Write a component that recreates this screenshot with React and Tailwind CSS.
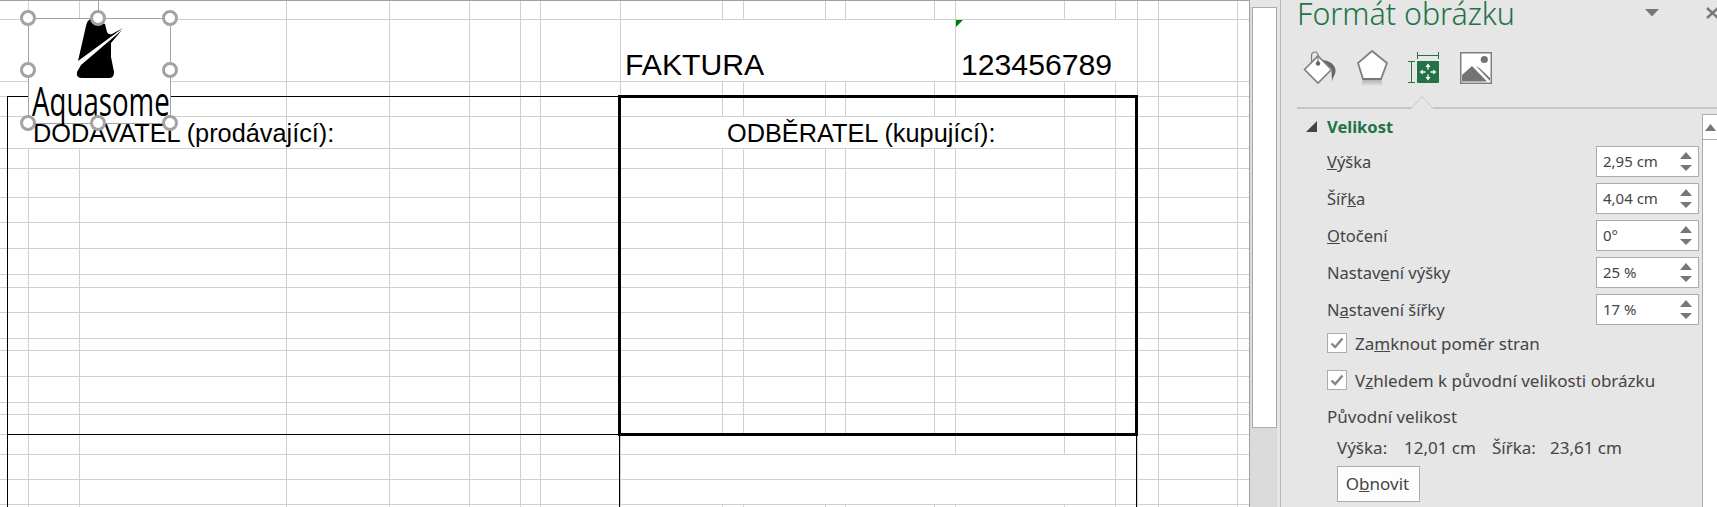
const ALL = [7, 28, 79, 286, 389, 469, 520, 540, 620, 722, 743, 825, 845, 934, 955, 1064, 1115, 1137, 1158, 1237];
const NO_FIRST = ALL.slice(1);
const RIGHT = [1115, 1137, 1158, 1237];

const without = (list, drop) => list.filter((x) => !drop.includes(x));

const ROWS = [
  { y: 19, lines: NO_FIRST },
  { y: 81, lines: [286, 389, 469, 520, 540, 620, 955, 1137, 1158, 1237] },
  { y: 96, lines: NO_FIRST },
  { y: 116, lines: without(ALL, [28]) },
  { y: 148, lines: [7, 286, 389, 469, 520, 540, 620, 1064, 1115, 1137, 1158, 1237] },
  { y: 168 },
  { y: 197 },
  { y: 222 },
  { y: 248 },
  { y: 274 },
  { y: 287 },
  { y: 312 },
  { y: 338 },
  { y: 350 },
  { y: 376 },
  { y: 402 },
  { y: 414 },
  { y: 434 },
  { y: 454, lines: [7, 28, 79, 286, 389, 469, 520, 540, 620, 955, 1064, ...RIGHT] },
  { y: 479, lines: [7, 28, 79, 286, 389, 469, 520, 540, 620, ...RIGHT] },
  { y: 504, lines: [7, 28, 79, 286, 389, 469, 520, 540, 620, ...RIGHT] },
  { y: 507 },
];

// text sits in the merged cell that ends at the given gridline
const CELL_TEXT = {
  "81:955": <span className="pl-[4px] text-[30.2px] leading-none self-end mb-[1px]">FAKTURA</span>,
  "81:1137": (
    <>
      <svg className="absolute left-0 top-0" width="7" height="7" viewBox="0 0 7 7">
        <path d="M0 0H7L0 7Z" fill="#008000" />
      </svg>
      <span className="pl-[5px] text-[30.2px] leading-none self-end mb-[1px]">123456789</span>
    </>
  ),
  "148:286": <span className="pl-[25px] text-[25.3px] leading-none mt-[3px]">DODAVATEL (prodávající):</span>,
  "148:1064": <span className="pl-[106px] text-[25.3px] leading-none mt-[3px]">ODBĚRATEL (kupující):</span>,
};

function SheetRow({ row, prevY }) {
  const lines = row.lines || ALL;
  const last = row.y === 507;
  return (
    <div className="flex shrink-0" style={{ height: row.y - prevY }}>
      {lines.map((x, i) => {
        const from = i === 0 ? -1 : lines[i - 1];
        return (
          <div
            key={x}
            className={`relative flex items-center whitespace-nowrap shrink-0 border-r border-[#d0d0d0] ${last ? "" : "border-b"}`}
            style={{ width: x - from }}
          >
            {CELL_TEXT[`${row.y}:${x}`]}
          </div>
        );
      })}
      <div className={`flex-1 border-[#d0d0d0] ${last ? "" : "border-b"}`} />
    </div>
  );
}

function Logo() {
  return (
    <svg className="absolute left-0 top-0" width="142" height="70" viewBox="28 18 142 70">
      <path
        d="M77 60 L85 25 Q86 19 90 18 L104 23 L106 31 Q107 34 111 33 L122 27 Z"
        fill="#000"
      />
      <path
        d="M121 29 L110 42 L110 56 L113 71 Q113 77 108 77 L81 77 Q75 77 76 71 L80 64 Z"
        fill="#000"
      />
    </svg>
  );
}

function Handle({ className }) {
  return <div className={`absolute w-[16px] h-[16px] rounded-full border-[3px] border-[#a3a3a3] bg-white ${className}`} />;
}

function Picture() {
  return (
    <>
      <div className="absolute left-[98px] top-0 w-px h-[18px] bg-[#a3a3a3]" />
      <div className="absolute left-[28px] top-[18px] w-[143px] h-[106px] bg-white border border-[#a3a3a3]">
        <Logo />
        <div
          className="absolute left-[3px] top-[53px] origin-left scale-x-[0.675] whitespace-nowrap text-[41px] leading-[56px] text-black"
          style={{ fontFamily: '"Open Sans", sans-serif' }}
        >
          Aquasome
        </div>
      </div>
      <Handle className="left-[20px] top-[10px]" />
      <Handle className="left-[90px] top-[10px]" />
      <Handle className="left-[162px] top-[10px]" />
      <Handle className="left-[20px] top-[62px]" />
      <Handle className="left-[162px] top-[62px]" />
      <Handle className="left-[20px] top-[115px]" />
      <Handle className="left-[90px] top-[115px]" />
      <Handle className="left-[162px] top-[115px]" />
    </>
  );
}

function Sheet() {
  return (
    <div
      className="relative w-[1250px] h-[507px] shrink-0 overflow-hidden bg-white border-r border-[#a0a0a0] text-black"
      style={{ fontFamily: '"Liberation Sans", Arial, sans-serif' }}
    >
      <div className="h-px bg-[#a0a0a0]" />
      <div className="flex flex-col">
        {ROWS.map((row, i) => (
          <SheetRow key={row.y} row={row} prevY={i === 0 ? 0 : ROWS[i - 1].y} />
        ))}
      </div>
      {/* thin borders */}
      <div className="absolute left-[7px] top-[96px] w-[612px] h-px bg-black" />
      <div className="absolute left-[7px] top-[96px] w-px h-[411px] bg-black" />
      <div className="absolute left-[7px] top-[434px] w-[612px] h-px bg-black" />
      <div className="absolute left-[619px] top-[434px] w-px h-[73px] bg-black" />
      <div className="absolute left-[1136px] top-[434px] w-px h-[73px] bg-black" />
      {/* thick box */}
      <div className="absolute left-[618px] top-[95px] w-[520px] h-[341px] border-[3px] border-black" />
      <Picture />
    </div>
  );
}

function Spin() {
  return (
    <svg width="12" height="20" viewBox="0 0 12 20" className="shrink-0">
      <path d="M6 0L12 7H0Z" fill="#777" />
      <path d="M0 13H12L6 19Z" fill="#777" />
    </svg>
  );
}

function Field({ label, value }) {
  return (
    <div className="flex items-center justify-between h-[31px] mb-[6px]">
      <div className="pt-[1px] text-[16.5px] text-[#444]">{label}</div>
      <div className="flex items-center justify-between w-[103px] h-[31px] pl-[6px] pr-[6px] bg-white border border-[#ababab] text-[15px] text-[#444]">
        <span>{value}</span>
        <Spin />
      </div>
    </div>
  );
}

function Check({ children }) {
  return (
    <div className="flex items-center h-[20px] mb-[17px]">
      <div className="flex items-center justify-center w-[20px] h-[20px] bg-white border border-[#ababab]">
        <svg width="14" height="12" viewBox="0 0 14 12">
          <path d="M1.5 6.5L5.2 10L12.5 1.5" fill="none" stroke="#858585" strokeWidth="2.4" />
        </svg>
      </div>
      <div className="ml-[8px] pt-[2px] text-[17px] text-[#444] whitespace-nowrap">{children}</div>
    </div>
  );
}

function TabIcons() {
  return (
    <div className="relative h-[46px] pl-[22px] shrink-0">
      <div className="flex items-start">
        <svg width="34" height="34" viewBox="0 0 34 34" className="mt-[1px]">
          <path d="M19 9C26 9 33 14 32.5 20C32 25 30 25 29 31L28.5 19Z" fill="#666" />
          <path d="M1.5 18.5L15 5L28.5 18.5L15 32Z" fill="#fff" stroke="#7f7f7f" strokeWidth="1.6" />
          <path d="M8.5 11V5Q8.5 1 12 1Q15 1 15 5V12" fill="none" stroke="#7f7f7f" strokeWidth="1.2" />
          <circle cx="15" cy="12.5" r="2.2" fill="#666" />
        </svg>
        <svg width="32" height="36" viewBox="0 0 32 36" className="ml-[20px]">
          <defs>
            <linearGradient id="refl" x1="0" y1="0" x2="0" y2="1">
              <stop offset="0" stopColor="#9a9a9a" />
              <stop offset="1" stopColor="#e6e6e6" />
            </linearGradient>
          </defs>
          <path d="M6 29L4 36H26L24 29Z" fill="url(#refl)" opacity="0.8" />
          <path d="M15 1L30 13L24 29H6L1 13Z" fill="#fff" stroke="#7f7f7f" strokeWidth="1.8" />
          <path d="M6 29H24" stroke="#777" strokeWidth="2" />
        </svg>
        <svg width="32" height="32" viewBox="0 0 32 32" className="ml-[19px] mt-[2px]">
          <path d="M9.5 0V7M9.5 3.5H30.5M30.5 0V7" fill="none" stroke="#217346" strokeWidth="1" />
          <path d="M0 9.5H7M3.5 9.5V30.5M0 30.5H7" fill="none" stroke="#217346" strokeWidth="1" />
          <rect x="9" y="9" width="22" height="22" rx="1" fill="#217346" />
          <path d="M20 11.5L22.5 15H20.7V17.5H19.3V15H17.5ZM20 28.5L17.5 25H19.3V22.5H20.7V25H22.5ZM11.5 20L15 17.5V19.3H17.5V20.7H15V22.5ZM28.5 20L25 22.5V20.7H22.5V19.3H25V17.5Z" fill="#fff" />
        </svg>
        <svg width="32" height="32" viewBox="0 0 32 32" className="ml-[20px] mt-[2px]">
          <rect x="0.75" y="0.75" width="30.5" height="30.5" fill="#fff" stroke="#7f7f7f" strokeWidth="1.5" />
          <circle cx="24.3" cy="7.5" r="3.6" fill="#737373" />
          <path d="M2 23L12 14L27 29.5H2Z" fill="#737373" />
          <path d="M16 14L20 16.5L30 26V29L16 14Z" fill="#737373" />
        </svg>
      </div>
    </div>
  );
}

function Separator() {
  return (
    <div className="relative h-[2px] ml-[16px] bg-[#c6c6c6] shrink-0">
      <svg className="absolute left-[114px] -top-[12px]" width="22" height="14" viewBox="0 0 22 14">
        <path d="M0 14H22V13L11 1L0 13Z" fill="#e6e6e6" />
        <path d="M0 13.5L11 1.5L22 13.5" fill="none" stroke="#c6c6c6" strokeWidth="1" />
      </svg>
    </div>
  );
}

function Panel() {
  return (
    <div
      className="flex flex-col flex-1 h-[507px] bg-[#e6e6e6] overflow-hidden"
      style={{ fontFamily: '"Noto Sans", "Open Sans", sans-serif' }}
    >
      <div className="flex items-start justify-between h-[50px] shrink-0 pl-[16px]">
        <div className="text-[30.4px] font-light leading-[28px] text-[#217346] whitespace-nowrap">Formát obrázku</div>
        <div className="flex items-start">
          <svg width="14" height="8" viewBox="0 0 14 8" className="mt-[9px]">
            <path d="M0 0H14L7 7.5Z" fill="#777" />
          </svg>
          <svg width="11" height="12" viewBox="0 0 11 12" className="ml-[47px] mt-[7px] shrink-0">
            <path d="M1 1L12 11M12 1L1 11" stroke="#777" strokeWidth="2.4" />
          </svg>
        </div>
      </div>
      <TabIcons />
      <div className="h-[11px] shrink-0" />
      <Separator />
      <div className="flex flex-1 min-h-0">
        <div className="flex-1 min-w-0 pl-[46px] pr-[3px]">
          <div className="relative h-[37px] flex items-center">
            <svg className="absolute -left-[21px] top-[12px]" width="11" height="11" viewBox="0 0 11 11">
              <path d="M11 0V11H0Z" fill="#444" />
            </svg>
            <div className="text-[16.5px] font-bold text-[#217346] mb-[1px]">Velikost</div>
          </div>
          <Field label={<><u>V</u>ýška</>} value="2,95 cm" />
          <Field label={<>Šíř<u>k</u>a</>} value="4,04 cm" />
          <Field label={<><u>O</u>točení</>} value="0°" />
          <Field label={<>Nastav<u>e</u>ní výšky</>} value="25 %" />
          <Field label={<>N<u>a</u>stavení šířky</>} value="17 %" />
          <div className="h-[2px]" />
          <Check>Za<u>m</u>knout poměr stran</Check>
          <Check>V<u>z</u>hledem k původní velikosti obrázku</Check>
          <div className="text-[17px] text-[#444] leading-[22px] mt-[-1px]">Původní velikost</div>
          <div className="flex pl-[10px] mt-[9px] text-[17px] text-[#444] leading-[22px] whitespace-nowrap">
            <span className="w-[67px]">Výška:</span>
            <span className="w-[88px]">12,01 cm</span>
            <span className="w-[58px]">Šířka:</span>
            <span>23,61 cm</span>
          </div>
          <button className="flex items-center justify-center ml-[10px] mt-[7px] w-[83px] h-[36px] pr-[2px] bg-[#fdfdfd] border border-[#ababab] text-[17px] text-[#444]">
            O<u>b</u>novit
          </button>
        </div>
        <div className="flex flex-col w-[15px] mt-[5px] shrink-0 bg-white border-l border-[#ababab]">
          <div className="flex items-center justify-center h-[26px] border-t border-b border-[#ababab]">
            <svg width="11" height="7" viewBox="0 0 11 7">
              <path d="M5.5 0L11 7H0Z" fill="#777" />
            </svg>
          </div>
        </div>
      </div>
    </div>
  );
}

function Scrollbar() {
  return (
    <div className="flex w-[31px] h-[507px] shrink-0 bg-[#e6e6e6] border-r border-[#b8b8b8]">
      <div className="flex flex-col w-[27px] pl-[2px] bg-[#dadada]">
        <div className="h-[7px] bg-[#e6e6e6] -ml-[2px] shrink-0" />
        <div className="h-[421px] bg-white border border-[#ababab] shrink-0" />
      </div>
    </div>
  );
}

export default function App() {
  return (
    <div className="flex w-[1717px] h-[507px] overflow-hidden">
      <Sheet />
      <Scrollbar />
      <Panel />
    </div>
  );
}
